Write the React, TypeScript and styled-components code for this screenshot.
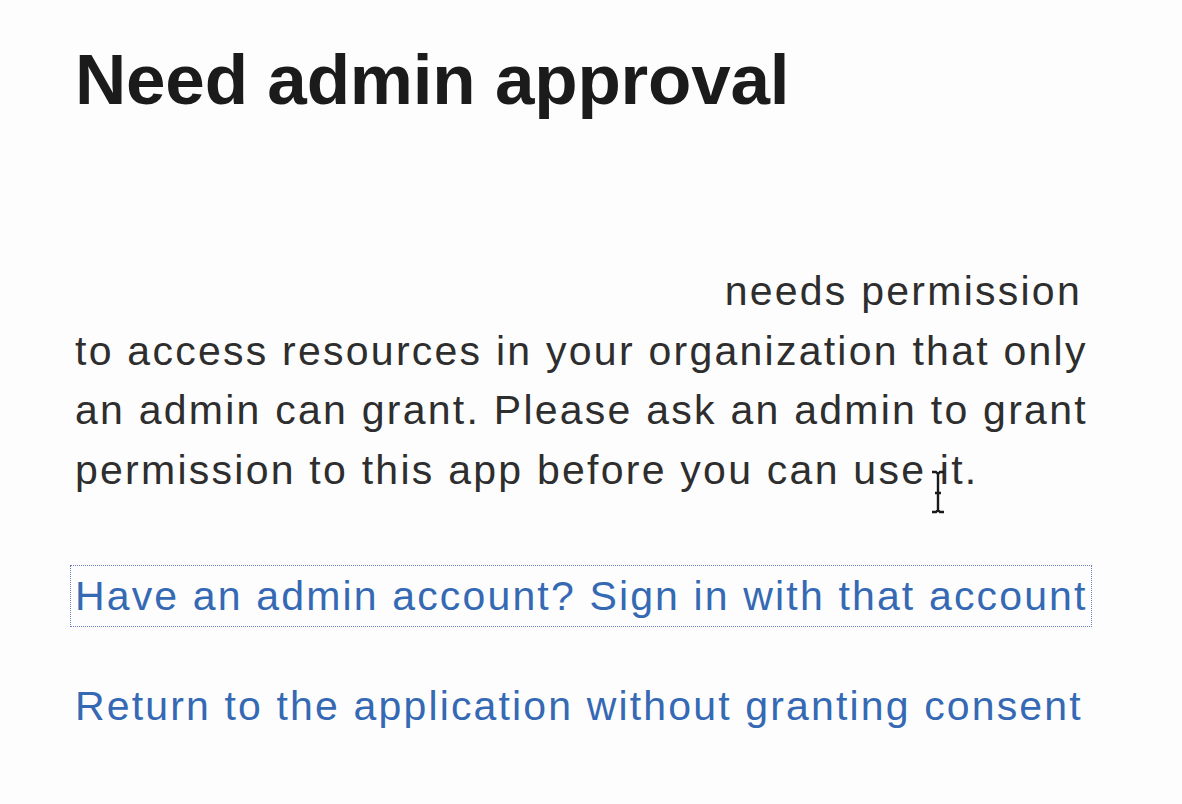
import React from "react";
import styled, { createGlobalStyle } from "styled-components";

const Global = createGlobalStyle`
  html, body { margin: 0; padding: 0; background: #fdfdfd; }
  body { font-family: "Liberation Sans", Arial, sans-serif; }
`;

const Page = styled.main`
  position: relative;
  width: 1182px;
  height: 804px;
  box-sizing: border-box;
  padding: 36px 0 0 75px;
  overflow: hidden;
`;

const Title = styled.h1`
  margin: 0;
  font-size: 71px;
  line-height: 88px;
  font-weight: 700;
  color: #1b1b1b;
  letter-spacing: -0.2px;
`;

const Blank = styled.div`
  height: 138px;
`;

const Body = styled.p`
  margin: 0;
  width: 1040px;
  font-size: 41px;
  line-height: 59.5px;
  letter-spacing: 2.25px;
  color: #2e2e2e;
`;

const Redacted = styled.span`
  display: inline-block;
  width: 636px;
`;

const Links = styled.div`
  display: flex;
  flex-direction: column;
  align-items: flex-start;
  gap: 50px;
  margin-top: 66px;
  margin-left: -4px;
`;

const Link = styled.a<{ $focused?: boolean }>`
  display: inline-block;
  padding: 0 3px 0 4px;
  font-size: 41px;
  line-height: 60px;
  letter-spacing: 2.15px;
  color: #3569b4;
  text-decoration: none;
  outline: ${(p) => (p.$focused ? "1px dotted #6b7fc4" : "none")};
`;

const Cursor = styled.svg`
  position: absolute;
  left: 929px;
  top: 470px;
`;

export default function App() {
  return (
    <>
      <Global />
      <Page>
        <Title>Need admin approval</Title>
        <Blank />
        <Body>
          <Redacted /> needs permission to access resources in your
          organization that only an admin can grant. Please ask an admin to
          grant permission to this app before you can use it.
        </Body>
        <Links>
          <Link href="#" $focused>
            Have an admin account? Sign in with that account
          </Link>
          <Link href="#">Return to the application without granting consent</Link>
        </Links>
        <Cursor width="18" height="44" viewBox="0 0 18 44">
          <path
            d="M3 2h4l2 2 2-2h4M9 4v36M3 42h4l2-2 2 2h4M6 23h6"
            stroke="#1a1a1a"
            strokeWidth="2.4"
            fill="none"
          />
        </Cursor>
      </Page>
    </>
  );
}
